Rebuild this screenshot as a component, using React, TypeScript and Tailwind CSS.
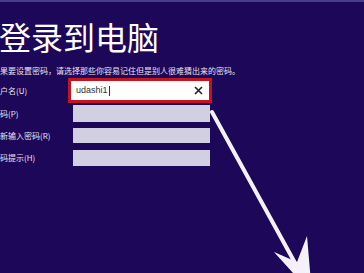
import React from 'react'

const cjk = { fontFamily: '"Noto Sans CJK SC", "Noto Sans", sans-serif' }

function Field({ label, className, children }: { label: string; className?: string; children: React.ReactNode }) {
  return (
    <div className={'flex items-center ' + (className ?? '')}>
      <div className="w-[73px] shrink-0 text-[8px] leading-none text-[#e8e4f4]">{label}</div>
      {children}
    </div>
  )
}

export default function App() {
  return (
    <div
      className="relative h-[273px] w-[364px] overflow-hidden border-t-2 border-[#4a3b8c] bg-[#1c0758]"
      style={cjk}
    >
      <h1 className="ml-[-1px] mt-[18px] text-[32px] font-normal leading-none text-white">
        登录到电脑
      </h1>
      <p className="mt-[15px] whitespace-nowrap text-[8px] leading-none text-[#e8e4f4]">
        果要设置密码，请选择那些你容易记住但是别人很难猜出来的密码。
      </p>

      <div className="mt-[3px] flex flex-col">
        <Field label="户名(U)">
          <div className="ml-[-5px] flex h-[25px] w-[144px] items-center border-[3px] border-[#c4141f] bg-white px-[5px]">
            <span
              className="text-[9px] leading-none text-[#333]"
              style={{ fontFamily: '"Liberation Sans", Arial, sans-serif' }}
            >
              udashi1
            </span>
            <span className="ml-[1px] h-[10px] w-px bg-[#333]" />
            <svg className="ml-auto mr-[1px]" width="9" height="9" viewBox="0 0 9 9">
              <path d="M1 1 L8 8 M8 1 L1 8" stroke="#222" strokeWidth="1.6" />
            </svg>
          </div>
        </Field>
        <Field label="码(P)" className="mt-[2px]">
          <div className="h-[17px] w-[137px] bg-[#d3cfe3]" />
        </Field>
        <Field label="新输入密码(R)" className="mt-[6px]">
          <div className="h-[15px] w-[137px] bg-[#d3cfe3]" />
        </Field>
        <Field label="码提示(H)" className="mt-[7px]">
          <div className="h-[16px] w-[137px] bg-[#d3cfe3]" />
        </Field>
      </div>

      <svg
        className="pointer-events-none absolute left-0 top-0"
        width="364"
        height="273"
        viewBox="0 0 364 273"
      >
        <line x1="212" y1="110" x2="300" y2="270" stroke="#f4f2f8" strokeWidth="4" strokeLinecap="round" />
        <path d="M312 292 L274 250 L297 260 L307 234 Z" fill="#f4f2f8" />
      </svg>
    </div>
  )
}
